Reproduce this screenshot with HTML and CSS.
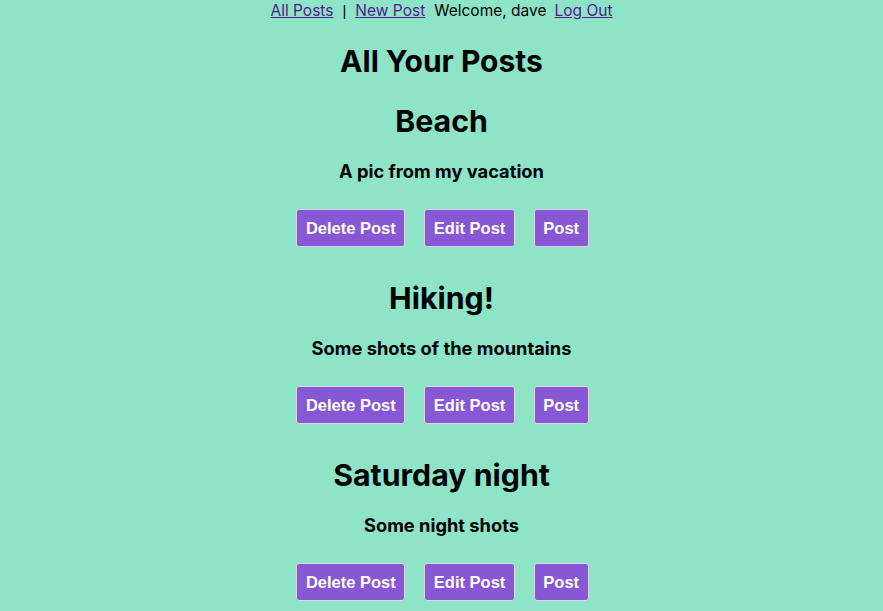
FILE: index.html
```html
<!DOCTYPE html>
<html>
<head>
<meta charset="utf-8">
<link rel="stylesheet" href="styles.css">
</head>
<body>
<nav class="nav">
  <a href="#" class="nav-link">All Posts</a><span class="sep">|</span><a href="#" class="nav-link">New Post</a><span class="welcome">Welcome, dave</span><a href="#" class="nav-link">Log Out</a>
</nav>
<h1 class="title">All Your Posts</h1>
<section class="post">
  <h2 class="post-title">Beach</h2>
  <h3 class="post-desc">A pic from my vacation</h3>
  <div class="actions"><button class="btn">Delete Post</button><button class="btn">Edit Post</button><button class="btn">Post</button></div>
</section>
<section class="post">
  <h2 class="post-title">Hiking!</h2>
  <h3 class="post-desc">Some shots of the mountains</h3>
  <div class="actions"><button class="btn">Delete Post</button><button class="btn">Edit Post</button><button class="btn">Post</button></div>
</section>
<section class="post">
  <h2 class="post-title">Saturday night</h2>
  <h3 class="post-desc">Some night shots</h3>
  <div class="actions"><button class="btn">Delete Post</button><button class="btn">Edit Post</button><button class="btn">Post</button></div>
</section>
</body>
</html>
```
FILE: styles.css
```css
html, body {
  margin: 0;
  padding: 0;
  background: #8de4c6;
}
body {
  font-family: Inter, "Noto Sans", sans-serif;
  color: #000;
  text-align: center;
}
.nav {
  height: 22px;
  line-height: 22px;
  font-size: 15.5px;
  display: flex;
  justify-content: center;
  align-items: center;
}
.nav-link {
  color: #551a8b;
  text-decoration: underline;
}
.sep {
  margin: 0 9px;
  font-family: "Liberation Sans", Arial, sans-serif;
  font-size: 15px;
}
.welcome {
  margin: 0 8px 0 9px;
}
.title {
  font-size: 30px;
  line-height: 36px;
  font-weight: 700;
  margin: 21px 0 0;
}
.post {
  margin-top: 24px;
}
.post + .post {
  margin-top: 33px;
}
.post-title {
  font-size: 30.3px;
  line-height: 36px;
  font-weight: 700;
  margin: 0;
}
.post-desc {
  font-size: 18.3px;
  line-height: 22px;
  font-weight: 700;
  margin: 21px 0 0;
}
.actions {
  margin-top: 27px;
  display: flex;
  justify-content: center;
  gap: 19px;
  padding-left: 2px;
}
.btn {
  font-family: "Liberation Sans", Arial, sans-serif;
  font-weight: 700;
  font-size: 16.5px;
  line-height: 20px;
  height: 38px;
  color: #fff;
  background: #8757d6;
  border: 1px solid #dcd3e8;
  border-radius: 3px;
  padding: 8px 8.5px;
  cursor: pointer;
}
```
